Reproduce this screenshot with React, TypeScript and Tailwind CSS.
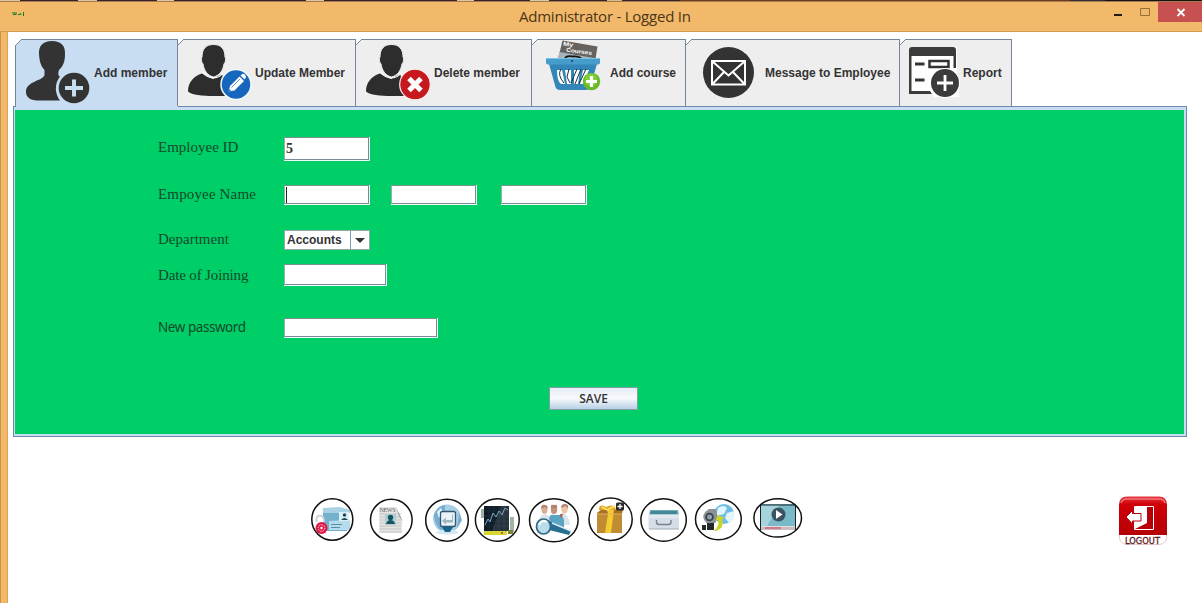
import type { ReactNode } from "react";

type ArtProps = { x: number; y: number; w: number; h: number; children: ReactNode };

function Art({ x, y, w, h, children }: ArtProps) {
  return (
    <svg width={w} height={h} viewBox={`${x} ${y} ${w} ${h}`} className="block shrink-0">
      {children}
    </svg>
  );
}

function AddMemberIcon() {
  return (
    <Art x={16} y={40} w={78} h={66}>
      <path
        d="M52 41C43 41 38.500 46 39 54C39.500 62 41 66 44.500 70V75C43 81 26 81 26 92C26 98 31 100.500 39 100.500H60C55 94 54 84 60 76.500C58 76 58 73 59 70C63 66 65 62 65 54C65.500 46 61 41 52 41Z"
        fill="#333"
      />
      <circle cx="74" cy="88" r="15.300" fill="#333" />
      <path d="M74 79.500V96.500M65 88H83" stroke="#c8ddf2" strokeWidth="4" />
    </Art>
  );
}

function Person({ dx }: { dx: number }) {
  return (
    <g transform={`translate(${dx} 0)`}>
      <path
        d="M202 73.500C194 76 188 82 188 91.500C192 95 202 96 214 96H226L225 82L222 74L213 79Z"
        fill="#2d2d2d"
      />
      <path
        d="M213.500 44.500C206 44.500 202 49 202 57C201 58 201 62 203 64C204 70 207 75.500 213.500 77C220 75.500 223 70 224 64C226 62 226 58 225 57C225 49 221 44.500 213.500 44.500Z"
        fill="#2d2d2d"
        stroke="#ededed"
        strokeWidth="1"
      />
      <path d="M202.500 72C206 77 209 77.800 213.500 77.800C218 77.800 221 76 223 73" fill="none" stroke="white" strokeWidth="1.300" />
    </g>
  );
}

function UpdateMemberIcon() {
  return (
    <Art x={178} y={40} w={77} h={66}>
      <Person dx={0} />
      <circle cx="236" cy="84.500" r="15" fill="#1766bd" stroke="#f3f7fb" strokeWidth="1.500" />
      <path d="M228.500 91.500L230 86L239.500 76.500L244 81L234.500 90.500Z" fill="white" />
      <path d="M240.500 75.500L242 74.200C243 73.500 244 73.800 245 74.800C246 76 246.300 77.200 245.500 78.200L244.500 79.500Z" fill="white" />
      <path d="M231.500 87.500L240 79" stroke="#1766bd" strokeWidth=".7" />
      <path d="M228.500 91.500L229.200 89L231 90.800Z" fill="#1766bd" />
    </Art>
  );
}

function DeleteMemberIcon() {
  return (
    <Art x={356} y={40} w={78} h={66}>
      <Person dx={178} />
      <circle cx="415" cy="84.500" r="15.300" fill="#c5191f" stroke="#fbeeee" strokeWidth="1.200" />
      <path d="M409 78.500L421 90.500M421 78.500L409 90.500" stroke="white" strokeWidth="5" />
    </Art>
  );
}

function AddCourseIcon() {
  return (
    <Art x={532} y={40} w={78} h={66}>
      <path d="M562.500 40.500L597.500 46.500L595.500 59H558Z" fill="#66625f" />
      <path d="M559.500 52L594 58H558Z" fill="#a5b4bd" />
      <path d="M565 58C567 55 570 56 573 56.500C577 56 580 57 582 59" stroke="#151515" strokeWidth="1.800" fill="none" />
      <g fill="white" fontFamily="Liberation Sans" fontWeight="700" fontSize="5.500">
        <text transform="translate(563 45.500) rotate(8)" textLength="10" lengthAdjust="spacingAndGlyphs">My</text>
        <text transform="translate(566 51.500) rotate(8)" textLength="26" lengthAdjust="spacingAndGlyphs">Courses</text>
      </g>
      <path d="M549 64H597L590 87Q589 90 586 90H560Q556.500 90 555.500 87Z" fill="#3386b8" />
      <path d="M546 58H600V62.500Q600 64.500 597 64.500H549Q546 64.500 546 62.500Z" fill="#469dcc" />
      <path d="M546 58.500H600" stroke="#79c3e5" />
      <path
        d="M557 70Q557 81 561 84H565L562 70ZM565 70L567 84H571V70ZM574 70V84H578L580 70ZM583 70L580 84H583L589 70Z"
        fill="white"
      />
      <path d="M561 69Q557 75 564 83M569 69L567 77L570 83M577 69L571 83M581 69L575 84M586 69L579 84" fill="none" stroke="#18303c" strokeWidth="1" />
      <circle cx="572" cy="61" r="1.100" fill="#174667" />
      <circle cx="591.500" cy="81.500" r="8.700" fill="#69b82c" />
      <circle cx="591" cy="80" r="6.500" fill="#80ce35" />
      <path d="M591.500 76V87M586 81.500H597" stroke="white" strokeWidth="3.200" />
    </Art>
  );
}

function MessageIcon() {
  return (
    <Art x={686} y={40} w={79} h={66}>
      <circle cx="728.500" cy="72.500" r="25.500" fill="#333" />
      <path
        d="M712 61H745V84.500H712ZM712.500 61.500L728.500 75.500L744.500 61.500M712.500 84L724.500 71.500M744.500 84L732.500 71.500"
        fill="none"
        stroke="white"
        strokeWidth="2"
      />
    </Art>
  );
}

function ReportIcon() {
  return (
    <Art x={900} y={40} w={63} h={66}>
      <path d="M909 47H957V78L959 79V97H934L932 94H909Z" fill="white" />
      <path d="M912 47H953Q956 47 956 50V68H953.500V56H911.500V91H930L932 94H909V50Q909 47 912 47Z" fill="#3b3b3b" />
      <path d="M915 64H924.500M915 80H924.500" stroke="#333" strokeWidth="2.800" />
      <path d="M929.500 61H948.500V67H929.500Z" fill="white" stroke="#333" strokeWidth="2.500" />
      <circle cx="945" cy="83" r="15" fill="white" />
      <circle cx="945" cy="83" r="14" fill="#3b3b3b" />
      <path d="M945 75V91M937 83H953" stroke="white" strokeWidth="2.800" />
    </Art>
  );
}

function Tab({ width, label, icon, active = false }: { width: string; label: string; icon: ReactNode; active?: boolean }) {
  return (
    <div
      className={`relative flex h-[67px] shrink-0 items-center border-t border-r border-[#76859b] ${width} ${
        active ? "bg-[#c8ddf2]" : "bg-[#eeeeee]"
      }`}
    >
      <svg width="7" height="7" viewBox="0 0 7 7" className="absolute -top-px left-0">
        <path d="M0 0H6L0 6Z" fill="white" />
        <path d="M0 6L6 0" stroke="#76859b" />
      </svg>
      {icon}
      <span className="text-[12px] leading-4 font-bold whitespace-nowrap text-[#333]">{label}</span>
    </div>
  );
}

function Field({ size, children }: { size: string; children?: ReactNode }) {
  return (
    <div className={`shrink-0 border-r border-b border-[#eefff7] ${size}`}>
      <div className="flex h-full items-center border border-t-[#75948a] border-r-[#7a8a99] border-b-[#7a8a99] border-l-[#8fb5a5] bg-white pl-px">
        {children}
      </div>
    </div>
  );
}

function Row({ label, className, labelClass, children }: { label: string; className: string; labelClass: string; children: ReactNode }) {
  return (
    <div className={`flex items-center ${className}`}>
      <div className={`w-[126px] shrink-0 leading-5 whitespace-nowrap text-[#124a2c] ${labelClass}`}>{label}</div>
      {children}
    </div>
  );
}

function Ring({ x, y, rx, ry }: { x: number; y: number; rx: number; ry: number }) {
  return <ellipse cx={x} cy={y} rx={rx} ry={ry} fill="none" stroke="#111" strokeWidth="1.500" />;
}

function Toolbar() {
  return (
    <div className="flex">
      <Art x={310} y={495} w={51} h={50}>
        <path d="M323 509H347V531H323Z" fill="#74b1cc" />
        <path d="M323 508L340 507L350 510V513H323Z" fill="#a6d2e2" />
        <path d="M329 521L350 520V530H329Z" fill="#b4dced" />
        <rect x="339" y="512" width="10" height="9" fill="#dceff4" />
        <circle cx="344.500" cy="515" r="1.800" fill="#174b5c" />
        <path d="M341 520Q344.500 516 348 520Z" fill="#174b5c" />
        <path d="M331 524.500H342M331 527.500H340" stroke="#5b8da0" strokeWidth="1" />
        <path d="M316.500 522V519Q317 515.500 320 515.500Q324 516 324 522" fill="none" stroke="#cfd5d8" strokeWidth="2" />
        <circle cx="321.500" cy="528" r="6" fill="#df1944" />
        <circle cx="321.500" cy="528" r="3.300" fill="none" stroke="#ffdbe2" strokeWidth="1" strokeDasharray="1.500 1" />
        <circle cx="321.500" cy="528" r="1.200" fill="white" />
        <Ring x={332.3} y={519.5} rx={20.5} ry={20.7} />
      </Art>
      <Art x={361} y={495} w={58} h={50}>
        <path d="M379 507H396L402 519V533H379Z" fill="#e4e4e2" />
        <path d="M380 514H401M380 517H401M380 520H401M380 523H401M380 526H401M380 529H401M380 532H402" stroke="#bbb" strokeWidth=".8" />
        <text x="379.500" y="512" fontSize="6" fontFamily="Liberation Serif" fill="#666" textLength="16">NEWS</text>
        <path d="M396 507L403 522L399 516Z" fill="#999" />
        <rect x="385" y="514" width="11" height="11" fill="#b3ced2" />
        <circle cx="390.500" cy="517.500" r="2.700" fill="#155461" />
        <path d="M386 524Q387 520 390.500 520Q394 520 395 524Z" fill="#155461" />
        <Ring x={391.3} y={520} rx={20.8} ry={20.7} />
      </Art>
      <Art x={419} y={495} w={53} h={50}>
        <circle cx="447" cy="518.500" r="14" fill="#a7cfe6" />
        <path d="M434 515Q438 506 445 505V532Q435 529 434 515ZM459 513L462 520L457 528Z" fill="#78acd0" />
        <path d="M437 512L441 508L443 512L439 518Z" fill="#e4f4fa" />
        <rect x="440.500" y="511.500" width="15" height="15" rx="2" fill="#e9f3f8" stroke="#345672" strokeWidth="1.300" />
        <path d="M452 514.500V520H446V517.500L441.800 521L446 524.500V522.500H453V514.500Z" fill="#9fb5c0" />
        <path d="M441 530H455L459 533Q447 536 435 533Z" fill="#d5e7ef" />
        <path d="M442 527H453L450 532H445Z" fill="#15648d" />
        <Ring x={447} y={520.2} rx={21.3} ry={21} />
      </Art>
      <Art x={472} y={495} w={52} h={50}>
        <path d="M481 509H485V518H481ZM510 517H514V532H510Z" fill="#a1b4a2" />
        <rect x="484" y="506" width="25" height="25" fill="#101c27" />
        <path d="M484 511H509M484 516H509M484 521H509M484 526H509M489 506V531M494 506V531M499 506V531M504 506V531" stroke="#273a47" strokeWidth=".5" />
        <path d="M485 525L488 519L490 522L493 513L496 517L499 511L502 515L505 508L508 510" fill="none" stroke="#7ca6c6" strokeWidth="1" />
        <path d="M501 506L509 506V531H492Z" fill="#87929a" opacity=".2" />
        <path d="M484 531H507V535H484Z" fill="#d8d633" />
        <path d="M508 530H513V534H508Z" fill="#7e8436" />
        <circle cx="502" cy="533" r="1" fill="#b44620" />
        <Ring x={497.3} y={520} rx={21.9} ry={21.2} />
      </Art>
      <Art x={524} y={495} w={60} h={50}>
        <path d="M539 521Q540 514 545 514Q549 514 550 521ZM557 521Q557 514 563 513Q569 515 570 525H557Z" fill="#d8e4e9" />
        <ellipse cx="544.500" cy="509.500" rx="3" ry="4.200" fill="#d9ac94" />
        <ellipse cx="554" cy="509.500" rx="3.200" ry="4.500" fill="#c88e7c" />
        <ellipse cx="564.500" cy="509" rx="3.200" ry="4.500" fill="#edc6a7" />
        <path d="M541 509Q541 504 545 505Q548 505 547.500 509L545 507ZM551 508Q550 504 554 505Q558 504 557 508ZM561 508Q561 504 565 504Q569 504 568 509L566 506Z" fill="#b38371" />
        <path d="M549 518Q550 514 554 515L562 515L564 520V529H551Z" fill="#5ba4c4" />
        <path d="M560 514L561 518L563 514" fill="#c34b38" />
        <path d="M549 521L571 531L569 535L549 530Z" fill="#287092" />
        <path d="M552 523L571 531" stroke="#dcecf2" strokeWidth="1.500" />
        <ellipse cx="543.500" cy="526.500" rx="7" ry="7.500" fill="#b8ddec" stroke="#326982" strokeWidth="1.700" />
        <path d="M539 525Q542 519 547 522" stroke="white" strokeWidth="2" fill="none" />
        <Ring x={553.8} y={520.3} rx={24.3} ry={21.5} />
      </Art>
      <Art x={584} y={495} w={53} h={50}>
        <path d="M597 513L602 509H623L622 514V533H597Z" fill="#a87224" />
        <path d="M597 514H622V533H597Z" fill="#c18b34" />
        <path d="M607 509H614L611 533H605L608 514Z" fill="#f4cc31" />
        <path d="M599 510Q599 503 606 507Q615 503 616 510Z" fill="#e1a827" />
        <path d="M602 507L607 510L615 506" fill="none" stroke="#ffe56e" strokeWidth="1.500" />
        <path d="M597 514H622" stroke="#e0b35d" />
        <rect x="616" y="502.500" width="8" height="8" rx="1.500" fill="#292929" />
        <path d="M620 504V509M617.500 506.500H622.500" stroke="white" strokeWidth="1.300" />
        <Ring x={610.6} y={519.2} rx={21.6} ry={21.2} />
      </Art>
      <Art x={637} y={495} w={54} h={50}>
        <path d="M650 510H678L679 516H649Z" fill="#76abba" />
        <path d="M651 511H677V514H650Z" fill="#428698" />
        <path d="M648.500 515H679V529H648.500Z" fill="#d5dee6" />
        <path d="M648.500 515H679M649 517H679" stroke="#eef3f5" />
        <path d="M656.500 520V522Q656.500 524.500 659 524.500H668.500Q671 524.500 671 522V520" fill="none" stroke="#748391" strokeWidth="1.400" />
        <path d="M649 529H679" stroke="#9daeb9" />
        <Ring x={663.6} y={520} rx={22.7} ry={21.2} />
      </Art>
      <Art x={691} y={495} w={57} h={50}>
        <circle cx="724" cy="514" r="10" fill="#6fbde2" />
        <path d="M718 508Q724 504 727 508L724 514L716 516ZM727 513L734 511Q736 520 729 523L725 518Z" fill="#e2f5fb" />
        <path d="M702 525H706V530H702ZM707 523H714V530H707Z" fill="#25282b" />
        <path d="M705 512L709 509H716L718 519L715 523H706Z" fill="#8a8f93" />
        <circle cx="709.500" cy="517" r="6.200" fill="#8e9599" />
        <circle cx="709.500" cy="517" r="4.300" fill="#39434b" />
        <circle cx="709.500" cy="517" r="2.500" fill="#8fa1ae" />
        <path d="M714 531Q720 525 718 520L715 521L718 515L725 518L722 519Q725 528 716 531Z" fill="#c9d629" />
        <Ring x={718.4} y={519.3} rx={22.9} ry={20.5} />
      </Art>
      <Art x={748} y={495} w={56} h={50}>
        <rect x="760.500" y="504" width="35" height="22" fill="#79b9c9" />
        <path d="M761 505H780L767 526H761Z" fill="#a5d4dc" />
        <path d="M760.500 530.500V505H795.500V530.500" fill="none" stroke="#1b2529" />
        <path d="M761 526.500H795V530H761Z" fill="#cbbdc2" />
        <path d="M765 528H781" stroke="#d06478" strokeWidth="1.500" />
        <circle cx="778.500" cy="514.500" r="7" fill="#3b5360" />
        <path d="M776 510L782.500 514.500L776 519Z" fill="white" />
        <Ring x={777.7} y={517.9} rx={23.8} ry={19.2} />
      </Art>
    </div>
  );
}

function LogoutIcon() {
  return (
    <svg width="50" height="50" viewBox="1118 496 50 50" className="block shrink-0">
      <defs>
        <linearGradient id="logout" x1="0" y1="0" x2="0" y2="1">
          <stop offset="0" stopColor="#e83a40" />
          <stop offset=".2" stopColor="#cf0008" />
          <stop offset="1" stopColor="#b50006" />
        </linearGradient>
      </defs>
      <path d="M1119.500 535V538Q1120 543 1126 544.500H1160Q1166 543 1166.500 538V535" fill="white" stroke="#d9a4a6" strokeWidth=".6" />
      <path d="M1119 505Q1119 496.500 1127 496.500H1159Q1167 496.500 1167 505V535H1119Z" fill="url(#logout)" />
      <path d="M1121 503Q1122 499 1127 499H1159Q1164 499 1165 503" fill="none" stroke="#f17678" strokeWidth="1.500" />
      <path d="M1134.500 506.500H1153.500V529.500H1134.500Z" fill="#b70008" stroke="white" />
      <path d="M1135 506H1147V523L1135 529Z" fill="white" />
      <path d="M1126 517L1132.500 510.500V513.500H1141V521H1132.500V524Z" fill="white" stroke="#b70008" />
      <text x="1142.500" y="543.500" textAnchor="middle" fontSize="9" fontFamily="DejaVu Sans" fill="#5c1519" stroke="#5c1519" strokeWidth=".3" textLength="35" lengthAdjust="spacingAndGlyphs">LOGOUT</text>
    </svg>
  );
}

export default function App() {
  return (
    <div className="flex h-[603px] w-[1202px] flex-col overflow-hidden bg-white font-['Liberation_Sans',sans-serif]">
      <div className="h-px shrink-0 bg-[linear-gradient(90deg,#e2c69b_0_20px,#3b2029_20px_78px,#dcc398_78px_97px,#3b2029_97px_157px,#e2c69b_157px_174px,#3b2029_174px_306px,#e2c69b_306px_324px,#3b2029_324px_457px,#e2c69b_457px_474px,#3b2029_474px_530px,#d2cca0_530px_549px,#3b2029_549px_607px,#d9b985_607px_622px,#3b2029_622px_680px,#713a18_680px_1070px,#302d39_1070px_1105px,#180f12_1105px)]" />
      <header className="flex h-[31px] shrink-0 items-start border-t border-b border-t-[#a57c50] border-b-[#d49a51] bg-[#f3b96b]">
        <div className="mt-[7px] ml-[11px] w-[508px]">
          <svg width="14" height="10" viewBox="0 0 14 10">
            <path d="M1 4H4M2 6L4 5L5 6M5 3V6M7 5L8 6L10 4M10 5V6M12.500 3V7" stroke="#16771c" strokeWidth="1" fill="none" />
          </svg>
        </div>
        <h1 className="mt-1 w-[594px] font-['Open_Sans',sans-serif] text-[15px] leading-[21px] tracking-[-0.23px] whitespace-nowrap text-[#483518]">
          Administrator - Logged In
        </h1>
        <svg width="42" height="20" viewBox="1113 2 42 20" className="shrink-0">
          <path d="M1114 15H1122" stroke="#211b13" strokeWidth="2" />
          <path d="M1140.500 8.500H1149.500V15.500H1140.500Z" fill="none" stroke="#967035" />
        </svg>
        <div className="ml-[3px] flex h-5 w-11 shrink-0 items-center justify-center bg-[#c75050] pl-0.5">
          <svg width="10" height="9" viewBox="0 0 10 9">
            <path d="M1.500 1L8.500 8M8.500 1L1.500 8" stroke="white" strokeWidth="1.800" />
          </svg>
        </div>
      </header>
      <div className="flex min-h-0 flex-1">
        <div className="w-2 shrink-0 border-r border-l border-l-[#c9914c] border-r-[#dda158] bg-[#f3b96b]" />
        <main className="flex min-w-0 flex-1 flex-col pt-[7px] pl-[5px]">
          <nav className="relative z-10 flex pl-0.5">
            <div className="h-[67px] w-px bg-[#76859b] [clip-path:inset(6px_0_0_0)]" />
            <Tab width="w-[162px]" label="Add member" icon={<AddMemberIcon />} active />
            <Tab width="w-[178px]" label="Update Member" icon={<UpdateMemberIcon />} />
            <Tab width="w-[176px]" label="Delete member" icon={<DeleteMemberIcon />} />
            <Tab width="w-[154px]" label="Add course" icon={<AddCourseIcon />} />
            <Tab width="w-[214px]" label="Message to Employee" icon={<MessageIcon />} />
            <Tab width="w-[112px]" label="Report" icon={<ReportIcon />} />
          </nav>
          <section className="relative h-[331px] w-[1174px] shrink-0 border border-[#6b8ba8] bg-[#c8ddf2] pt-[3px] pr-0.5 pb-0.5 pl-px">
            <div className="absolute -top-px left-0.5 h-px w-[162px] bg-[#c8ddf2]" />
            <div className="h-full bg-[#00ce66] pt-[27px] pl-[143px]">
              <Row label="Employee ID" className="h-6" labelClass="font-['Liberation_Serif',serif] text-[15px] -mt-1">
                <Field size="h-6 w-[86px]">
                  <span className="font-['Liberation_Serif',serif] text-[14px] leading-5 font-bold text-[#333]">5</span>
                </Field>
              </Row>
              <Row
                label="Empoyee Name"
                className="mt-6 h-5"
                labelClass="font-['Liberation_Serif',serif] text-[15px] tracking-[0.15px] -mt-0.5"
              >
                <Field size="h-5 w-[86px]">
                  <div className="h-4 w-px bg-[#222]" />
                </Field>
                <div className="flex gap-6 pl-[21px]">
                  <Field size="h-5 w-[86px]" />
                  <Field size="h-5 w-[86px]" />
                </div>
              </Row>
              <Row label="Department" className="mt-[25px] h-5" labelClass="font-['Liberation_Serif',serif] text-[15px] -mt-0.5">
                <div className="flex h-5 w-[86px] border border-[#93aaa9] bg-white">
                  <span className="w-[65px] pl-0.5 text-[12px] leading-[18px] font-bold text-[#333]">Accounts</span>
                  <div className="flex flex-1 items-center justify-center border-l border-[#7a9ab9]">
                    <svg width="10" height="5" viewBox="0 0 10 5">
                      <path d="M0 0H10L5 5Z" fill="#333" />
                    </svg>
                  </div>
                </div>
              </Row>
              <Row
                label="Date of Joining"
                className="mt-3.5 h-[22px]"
                labelClass="font-['Liberation_Serif',serif] text-[15px] tracking-[-0.15px]"
              >
                <Field size="h-[22px] w-[103px]" />
              </Row>
              <Row
                label="New password"
                className="mt-8 h-5"
                labelClass="font-['Noto_Sans',sans-serif] text-[13.5px] tracking-[-0.45px] -mt-0.5"
              >
                <Field size="h-5 w-[154px]" />
              </Row>
              <button className="mt-[49px] ml-[391px] flex h-[23px] w-[89px] items-center justify-center border border-[#7f9fa5] bg-linear-to-b from-[#e7edf5] via-[#f7f9fb] to-[#b8cfe5] font-['Open_Sans',sans-serif] text-[12px] leading-4 font-semibold text-[#333]">
                SAVE
              </button>
            </div>
          </section>
          <footer className="flex pt-[58px] pl-[297px]">
            <Toolbar />
            <div className="w-[314px]" />
            <div className="pt-px">
              <LogoutIcon />
            </div>
          </footer>
        </main>
      </div>
    </div>
  );
}
